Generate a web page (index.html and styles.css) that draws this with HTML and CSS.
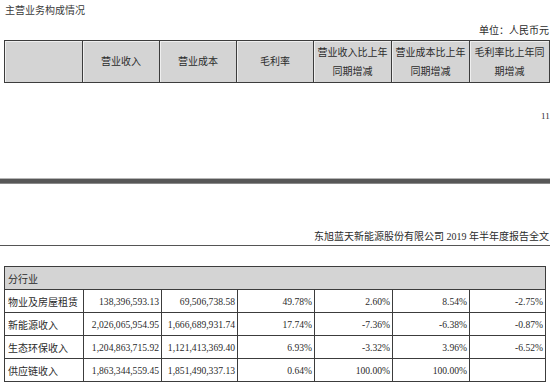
FILE: index.html
```html
<!DOCTYPE html>
<html lang="zh-CN">
<head>
    <meta charset="UTF-8">
    <title>主营业务构成情况</title>
    <link rel="stylesheet" href="styles.css">
</head>
<body>
    <div class="page">
        <div class="sec-title">主营业务构成情况</div>
        <div class="unit">单位：人民币元</div>

        <table class="grid head-table">
            <colgroup>
                <col style="width:78px"><col style="width:77px"><col style="width:77px"><col style="width:77px">
                <col style="width:78px"><col style="width:78px"><col style="width:80px">
            </colgroup>
            <tr>
                <th></th>
                <th>营业收入</th>
                <th>营业成本</th>
                <th>毛利率</th>
                <th>营业收入比上年<br>同期增减</th>
                <th>营业成本比上年<br>同期增减</th>
                <th>毛利率比上年同<br>期增减</th>
            </tr>
        </table>

        <div class="page-num">11</div>

        <div class="page-break"></div>

        <div class="doc-header">东旭蓝天新能源股份有限公司 2019 年半年度报告全文</div>

        <table class="grid body-table">
            <colgroup>
                <col style="width:79px"><col style="width:78px"><col style="width:76px"><col style="width:77px">
                <col style="width:78px"><col style="width:77px"><col style="width:76px">
            </colgroup>
            <tr class="group">
                <td colspan="7">分行业</td>
            </tr>
            <tr>
                <td class="label">物业及房屋租赁</td>
                <td>138,396,593.13</td>
                <td>69,506,738.58</td>
                <td>49.78%</td>
                <td>2.60%</td>
                <td>8.54%</td>
                <td>-2.75%</td>
            </tr>
            <tr>
                <td class="label">新能源收入</td>
                <td>2,026,065,954.95</td>
                <td>1,666,689,931.74</td>
                <td>17.74%</td>
                <td>-7.36%</td>
                <td>-6.38%</td>
                <td>-0.87%</td>
            </tr>
            <tr>
                <td class="label">生态环保收入</td>
                <td>1,204,863,715.92</td>
                <td>1,121,413,369.40</td>
                <td>6.93%</td>
                <td>-3.32%</td>
                <td>3.96%</td>
                <td>-6.52%</td>
            </tr>
            <tr>
                <td class="label">供应链收入</td>
                <td>1,863,344,559.45</td>
                <td>1,851,490,337.13</td>
                <td>0.64%</td>
                <td>100.00%</td>
                <td>100.00%</td>
                <td></td>
            </tr>
            <tr class="group">
                <td colspan="7">&nbsp;</td>
            </tr>
        </table>
    </div>
</body>
</html>
```

FILE: styles.css
```css
* {
    margin: 0;
    padding: 0;
    box-sizing: border-box;
}

html, body {
    overflow: hidden;
}

body {
    font-family: "Liberation Serif", "Noto Sans CJK SC", serif;
    color: #2b2b2b;
    background: #fff;
    width: 550px;
}

.page {
    padding: 0 0 0 4px;
}

.sec-title {
    height: 22px;
    line-height: 22px;
    font-size: 10px;
    padding-left: 1px;
    color: #3a3a3a;
}

.unit {
    height: 18px;
    line-height: 18px;
    font-size: 10px;
    text-align: right;
    padding-right: 1px;
}

.grid {
    border-collapse: collapse;
    table-layout: fixed;
}

.grid th,
.grid td {
    border: 1px solid #3c3c3c;
    font-size: 10px;
    font-weight: normal;
}

.head-table {
    width: 545px;
}

.head-table th {
    height: 42px;
    background: #d4d4d4;
    text-align: center;
    line-height: 19px;
    padding: 0;
    white-space: nowrap;
    box-shadow: inset 1px 1px 0 #efefef;
}

.page-num {
    margin-top: 24px;
    height: 19px;
    line-height: 19px;
    font-size: 9px;
    padding-left: 537px;
    white-space: nowrap;
}

.page-break {
    margin: 52px 0 0 -4px;
    height: 6px;
    background: #575757;
    border-top: 1px solid #b5b5b5;
    border-bottom: 1px solid #8a8a8a;
}

.doc-header {
    margin: 45px 0 0 -4px;
    height: 17px;
    line-height: 16px;
    font-size: 10px;
    text-align: right;
    padding-right: 1px;
    border-bottom: 1px solid #555;
    white-space: nowrap;
}

.body-table {
    margin-top: 20px;
    width: 541px;
}

.body-table td {
    height: 23px;
    text-align: right;
    padding: 0 2px 0 2px;
    font-size: 9.6px;
    white-space: nowrap;
}

.body-table td.label {
    text-align: left;
    padding-left: 3px;
    font-size: 10px;
}

.body-table tr.group td {
    background: #d4d4d4;
    text-align: left;
    padding-left: 3px;
    font-size: 10px;
}
```
